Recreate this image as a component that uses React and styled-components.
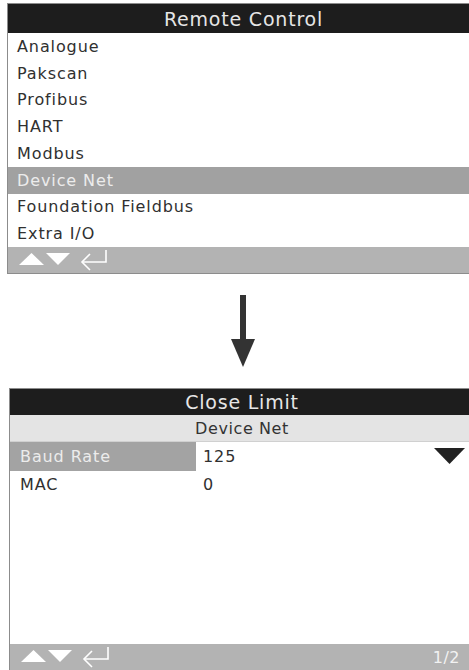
import React from "react";
import styled, { createGlobalStyle } from "styled-components";

const Global = createGlobalStyle`
  html, body { margin: 0; padding: 0; background: #ffffff; overflow: hidden; }
  body { font-family: "DejaVu Sans", "Noto Sans", sans-serif; }
`;

const Page = styled.div`
  width: 469px;
  height: 670px;
  overflow: hidden;
  padding-top: 3px;
  box-sizing: border-box;
  display: flex;
  flex-direction: column;
`;

const Panel = styled.div`
  margin-left: ${(p) => p.$left}px;
  width: ${(p) => p.$width}px;
  height: ${(p) => (p.$h ? `${p.$h}px` : "auto")};
  box-sizing: border-box;
  border: 1px solid #8c8c8c;
  border-right: none;
  display: flex;
  flex-direction: column;
  flex-shrink: 0;
  background: #fff;
`;

const Title = styled.div`
  height: ${(p) => p.$h}px;
  flex-shrink: 0;
  background: #1d1d1d;
  color: #e6e6e6;
  font-size: 19px;
  letter-spacing: 0.8px;
  display: flex;
  align-items: center;
  justify-content: center;
`;

const SubTitle = styled.div`
  height: 27px;
  flex-shrink: 0;
  background: #e4e4e4;
  border-bottom: 1px solid #d0d0d0;
  color: #333;
  font-size: 16px;
  letter-spacing: 0.6px;
  display: flex;
  align-items: center;
  justify-content: center;
  box-sizing: border-box;
`;

const ListRow = styled.div`
  height: 26.75px;
  padding-left: 9px;
  display: flex;
  align-items: center;
  font-size: 16px;
  letter-spacing: 0.9px;
  background: ${(p) => (p.$selected ? "#a1a1a1" : "transparent")};
  color: ${(p) => (p.$selected ? "#ececec" : "#303030")};
`;

const Footer = styled.div`
  height: 26px;
  flex-shrink: 0;
  background: #b3b3b3;
  display: flex;
  align-items: center;
  padding: 0 ${(p) => p.$pr}px 0 ${(p) => p.$pl}px;
`;

const NavIcons = styled.svg`
  display: block;
  flex-shrink: 0;
`;

const PageNum = styled.span`
  margin-left: auto;
  color: #f2f2f2;
  font-size: 16px;
  letter-spacing: 0.5px;
`;

const ArrowWrap = styled.div`
  height: 114px;
  flex-shrink: 0;
  display: flex;
  align-items: center;
  padding-left: 231px;
`;

const Grid = styled.div`
  display: grid;
  grid-template-columns: 186px 1fr 40px;
  grid-auto-rows: 28.5px;
`;

const Label = styled.div`
  display: flex;
  align-items: center;
  padding-left: 10px;
  font-size: 16px;
  letter-spacing: 0.9px;
  background: ${(p) => (p.$selected ? "#a3a3a3" : "transparent")};
  color: ${(p) => (p.$selected ? "#ececec" : "#303030")};
`;

const Value = styled.div`
  display: flex;
  align-items: center;
  padding-left: 7px;
  font-size: 16px;
  letter-spacing: 0.9px;
  color: #303030;
`;

const DropCell = styled.div`
  display: flex;
  align-items: center;
  justify-content: flex-start;
`;

const Empty = styled.div`
  flex: 1;
`;

function Nav() {
  return (
    <NavIcons width="92" height="22" viewBox="0 0 92 22">
      <polygon points="0,16 12.5,4 25,16" fill="#ffffff" />
      <polygon points="27,4 51,4 39,16" fill="#ffffff" />
      <g stroke="#ffffff" strokeWidth="1.6" fill="none">
        <polyline points="87,1 87,13 64,13" />
        <polyline points="71,5 63,13 71,21" />
      </g>
    </NavIcons>
  );
}

const topItems = [
  "Analogue",
  "Pakscan",
  "Profibus",
  "HART",
  "Modbus",
  "Device Net",
  "Foundation Fieldbus",
  "Extra I/O",
];

export default function App() {
  return (
    <>
      <Global />
      <Page>
        <Panel $left={7} $width={472}>
          <Title $h={29}>Remote Control</Title>
          {topItems.map((t) => (
            <ListRow key={t} $selected={t === "Device Net"}>
              {t}
            </ListRow>
          ))}
          <Footer $pl={11} $pr={0}>
            <Nav />
          </Footer>
        </Panel>

        <ArrowWrap>
          <svg width="24" height="72" viewBox="0 0 24 72">
            <rect x="9" y="0" width="6" height="46" fill="#333333" />
            <polygon points="0,44 24,44 12,72" fill="#333333" />
          </svg>
        </ArrowWrap>

        <Panel $left={9} $width={465} $h={283}>
          <Title $h={26}>Close Limit</Title>
          <SubTitle>Device Net</SubTitle>
          <Grid>
            <Label $selected>Baud Rate</Label>
            <Value>125</Value>
            <DropCell>
              <svg width="31" height="16" viewBox="0 0 31 16">
                <polygon points="0,0 31,0 15.5,16" fill="#222222" />
              </svg>
            </DropCell>
            <Label>MAC</Label>
            <Value>0</Value>
            <DropCell />
          </Grid>
          <Empty />
          <Footer $pl={11} $pr={14}>
            <Nav />
            <PageNum>1/2</PageNum>
          </Footer>
        </Panel>
      </Page>
    </>
  );
}
